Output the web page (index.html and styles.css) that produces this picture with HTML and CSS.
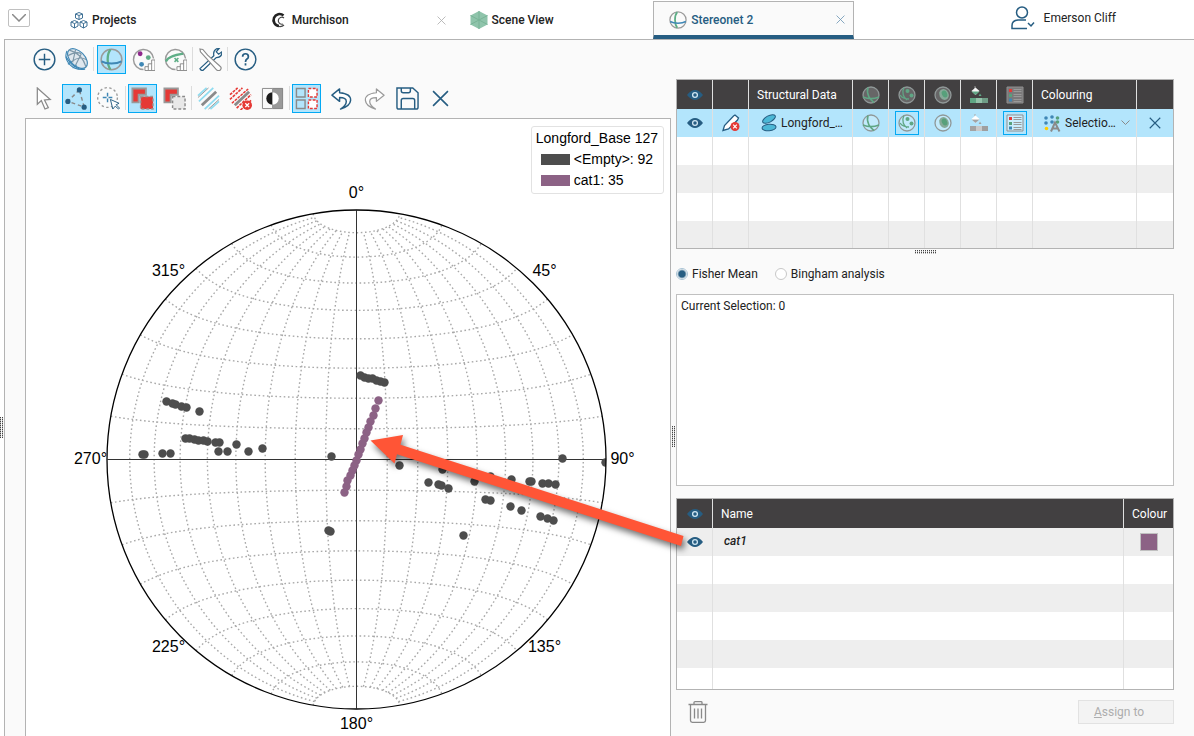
FILE: index.html
```html
<!DOCTYPE html>
<html lang="en">
<head>
    <meta charset="UTF-8">
    <meta name="viewport" content="width=device-width, initial-scale=1.0">
    <title>Stereonet 2</title>
    <link rel="stylesheet" href="styles.css">
</head>
<body>
    <!-- Shared icons -->
    <svg class="sprite" aria-hidden="true">
        <symbol id="i-eye" viewBox="0 0 16 10"><path d="M0 5Q8-5 16 5Q8 15 0 5z" fill="#265d82"/><circle cx="8" cy="5" r="2.4" fill="none" stroke="#cfe6f2" stroke-width="1.3"/></symbol>
        <symbol id="i-close" viewBox="0 0 16 16"><path d="M1 1l14 14M15 1L1 15" fill="none" stroke="currentColor" stroke-width="1.5"/></symbol>
        <symbol id="i-net" viewBox="0 0 24 24"><circle cx="12" cy="12" r="10.8" fill="none" stroke="#9a9a9a" stroke-width="1.6"/><path d="M11 1.5C7 6 7 17 11 22.5" fill="none" stroke="#5fae87" stroke-width="2.4"/><path d="M1.5 14C7 17 17 17 22.5 14" fill="none" stroke="#3f87b5" stroke-width="2"/></symbol>
        <symbol id="i-planes" viewBox="0 0 18 18"><circle cx="9" cy="9" r="8" class="disc"/><path d="M6 1.5C4 8 8 14 12 16.5M1 11C6 13 12 13 17 11" fill="none" stroke="#5fa684" stroke-width="1.6"/></symbol>
        <symbol id="i-poles" viewBox="0 0 18 18"><circle cx="9" cy="9" r="8" class="disc"/><path d="M6 1.5C3 7 6 12 9 14M2 9C4 12 7 13 11 13" fill="none" stroke="#5fa684" stroke-width="1.3"/><circle cx="9.5" cy="5" r="2" fill="#5fa684"/><circle cx="13.5" cy="9.5" r="2" fill="#5fa684"/></symbol>
        <symbol id="i-contour" viewBox="0 0 18 18"><circle cx="9" cy="9" r="8" class="disc"/><ellipse cx="10" cy="8.5" rx="4.6" ry="5.6" fill="#86a998" transform="rotate(-25 10 8.5)"/><ellipse cx="10.5" cy="8" rx="2.6" ry="3.6" fill="#57a07b" transform="rotate(-25 10.5 8)"/></symbol>
        <symbol id="i-bucket" viewBox="0 0 18 18"><path d="M5 0v4" stroke="#999" stroke-width="1"/><path d="M5.5 1.500l4 3.5-4 4-4-4z" class="pail"/><path d="M1.500 5.500h8l-4 3.500z" class="paint"/><path d="M10 7.500l1.600 2.500h-3z" class="paint"/><path d="M0 12h6v5H0z" class="paint"/><path d="M6 12h6v5H6z" class="paint-light"/><path d="M12 12h6v5h-6z" class="paint-mid"/></symbol>
        <symbol id="i-legend" viewBox="0 0 18 18"><path d="M1 1h16v16H1z" class="sheet"/><path d="M3 3h3v3H3z" fill="#e53935"/><path d="M3 8h3v3H3z" fill="#57a07b"/><path d="M3 12.500h3v3H3z" fill="#3f87b5"/><path d="M7.500 3.500h8M7.500 5.500h8M7.500 8.500h8M7.500 10.500h8M7.500 13.500h8M7.500 15.500h8" stroke="#999" stroke-width="1"/></symbol>
    </svg>

    <header class="topbar">
        <button class="menu-button" aria-label="Menu"><svg width="14" height="8" viewBox="0 0 14 8"><path d="M0 0l7 7 7-7" fill="none" stroke="#8a8a8a" stroke-width="1.5"/></svg></button>
        <nav class="tabs">
            <div class="tab">
                <svg width="18" height="17" viewBox="0 0 18 17" fill="none" stroke="#3f7196" stroke-width="1"><path d="M9 .5l3.500 1.500v4L9 7.500 5.500 6V2zM5.500 2L9 3.500 12.500 2M9 3.500v4"/><path d="M4.500 8.500L8 10v4l-3.500 2L1 14v-4zM1 10l3.500 1.500L8 10M4.500 11.500V16"/><path d="M13.500 8.500L17 10v4l-3.500 2-3.500-2v-4zM10 10l3.500 1.500L17 10M13.500 11.500V16"/></svg>
                <a href="#">Projects</a>
            </div>
            <div class="tab">
                <svg width="18" height="16" viewBox="0 0 18 16"><path d="M13.500 3.500A6 6 0 1 0 9 14" fill="none" stroke="#222" stroke-width="2.600"/><path d="M14 6A3.500 3.500 0 1 0 13 12M9 14.500q3 .5 5-1.500" fill="none" stroke="#444" stroke-width="1.200"/></svg>
                <a href="#">Murchison</a>
                <button class="tab-close" aria-label="Close Murchison"><svg width="9" height="9"><use href="#i-close"/></svg></button>
            </div>
            <div class="tab">
                <svg width="18" height="18" viewBox="0 0 18 18"><path d="M9 0l8.500 4.500v9L9 18 .5 13.500v-9z" fill="#8fc4ab"/><path d="M9 9V0M9 9l8.500-4.500M9 9l8.500 4.500M9 9v9M9 9L.5 13.500M9 9L.5 4.500" stroke="#79b397"/></svg>
                <a href="#">Scene View</a>
            </div>
            <div class="tab tab-active">
                <svg width="18" height="18"><use href="#i-net"/></svg>
                <a href="#">Stereonet 2</a>
                <button class="tab-close" aria-label="Close Stereonet 2"><svg width="9" height="9"><use href="#i-close"/></svg></button>
            </div>
        </nav>
        <button class="user">
            <svg width="24" height="24" viewBox="0 0 24 24" fill="none" stroke="#265d82" stroke-width="1.500"><circle cx="11" cy="6.500" r="5.500"/><path d="M16 22.500H1v-3q0-5 6-5.500h8M17 17l3 3 3-3.500"/></svg>
            <span>Emerson Cliff</span>
        </button>
    </header>

    <div class="workspace">
        <div class="gutter"><span class="grip grip-v"></span></div>
        <main class="panel">
            <section class="view">
                <div class="toolbar">
                    <button class="tool" aria-label="Add"><svg viewBox="0 0 24 24"><circle cx="12" cy="12" r="10.800" fill="none" stroke="#265d82" stroke-width="1.500"/><path d="M12 6v12M6 12h12" stroke="#265d82" stroke-width="1.500"/></svg></button>
                    <button class="tool" aria-label="Wireframe"><svg viewBox="0 0 24 24" fill="none" stroke="#3f87b5" stroke-width="1.200"><path d="M2 3C-2 13 7 24 21 22"/><ellipse cx="13" cy="11" rx="12.500" ry="7.500" transform="rotate(45 13 11)" fill="#dfe7ee"/><path d="M4 2Q18 6 22 20M11 2L8 15M17 6l-6 12M3 8Q12 3 17 6M7 14Q15 8 22 12" stroke="#7d97a8"/><path d="M1 9q5 9 14 13M3 17l4-3M8 21l4-3"/></svg></button>
                    <span class="separator"></span>
                    <button class="tool tool-on" aria-label="Stereonet"><svg><use href="#i-net"/></svg></button>
                    <button class="tool" aria-label="Pole statistics"><svg viewBox="0 0 24 24"><path d="M12 22.500A10.500 10.500 0 1 1 22.500 11" fill="none" stroke="#9a9a9a" stroke-width="1.500"/><circle cx="8.500" cy="6" r="2.500" fill="#8e2a8c"/><circle cx="17" cy="10" r="2.500" fill="#5fae87"/><circle cx="10" cy="17" r="2.500" fill="#3f87b5"/><path d="M13.500 23.500v-4H17v-3h3.500v-4H24v11zM17 23v-4M20.500 23v-7" fill="#fff" stroke="#8a8a8a"/></svg></button>
                    <button class="tool" aria-label="Plane statistics"><svg viewBox="0 0 24 24"><path d="M12 22.500A10.500 10.500 0 1 1 22.500 11" fill="none" stroke="#9a9a9a" stroke-width="1.500"/><path d="M2 14C5 8 14 7 20 6" fill="none" stroke="#5fae87" stroke-width="2.400"/><path d="M11 10.500l4 4M15 10.500l-4 4" stroke="#5fae87" stroke-width="1.600"/><path d="M13.500 23.500v-4H17v-3h3.500v-4H24v11zM17 23v-4M20.500 23v-7" fill="#fff" stroke="#8a8a8a"/></svg></button>
                    <span class="separator"></span>
                    <button class="tool" aria-label="Settings"><svg viewBox="0 0 24 24" fill="#fff"><path d="M1 21.500L15.500 8q-1-5 2.500-7l3-.5-3 3.500 2.500 2.500L24 4q0 6-6 6L4 23.500q-2 0-3-2z" stroke="#265d82" stroke-width="1.300"/><path d="M1 1l3 .5 5 6L22 19q2 1.500.5 3.500t-4 .5L7 10 1.500 4z" stroke="#8a8a8a" stroke-width="1.200"/></svg></button>
                    <span class="separator"></span>
                    <button class="tool" aria-label="Help"><svg viewBox="0 0 24 24" fill="none" stroke="#265d82" stroke-width="1.500"><circle cx="12" cy="12" r="10.800"/><path d="M9 9q0-3 3-3t3 3q0 1.500-1.500 2.500T12 14.500M12 16v2.200" stroke-width="1.800"/></svg></button>
                </div>
                <div class="toolbar toolbar-edit">
                    <button class="tool" aria-label="Select"><svg viewBox="0 0 24 24"><path d="M4.500 1v17l4.200-3.800L12.500 23l3.500-1.500-4-8 6-.5z" fill="#fff" stroke="#8a8a8a" stroke-width="1.300"/></svg></button>
                    <button class="tool tool-on" aria-label="Polygon select"><svg viewBox="0 0 24 24"><path d="M15 3L3 15l17 6z" fill="none" stroke="#8a8a8a" stroke-width="1.500" stroke-dasharray="4 3"/><circle cx="15" cy="3" r="2.700" fill="#265d82"/><circle cx="3" cy="15" r="2.700" fill="#265d82"/><circle cx="20" cy="21" r="2.700" fill="#265d82"/></svg></button>
                    <button class="tool" aria-label="Area select"><svg viewBox="0 0 24 24"><circle cx="11" cy="11" r="10.300" fill="none" stroke="#9a9a9a" stroke-width="1.400" stroke-dasharray="2.500 2.500"/><path d="M11 6v10M6 11h10" stroke="#3f87b5" stroke-width="1.500" stroke-dasharray="4 2"/><path d="M14 13l2.500 10 2.500-3 3.500 3 1-1-3.500-3.500 3-1.500z" fill="#fff" stroke="#265d82"/></svg></button>
                    <span class="separator"></span>
                    <button class="tool tool-on" aria-label="Replace selection"><svg viewBox="0 0 24 24"><path d="M1.500 1.500h14V8H8v8H1.500z" fill="#e53935" stroke="#999" stroke-width="2"/><path d="M10 10h13v13H10z" fill="#e53935" stroke="#999" stroke-width="1.500" stroke-dasharray="3 2"/></svg></button>
                    <button class="tool" aria-label="Clear selection"><svg viewBox="0 0 24 24"><path d="M1.500 1.500h14V8H8v8H1.500z" fill="#e53935" stroke="#999" stroke-width="2"/><path d="M10 10h13v13H10z" fill="#e8e8e8" stroke="#8a8a8a" stroke-width="1.500" stroke-dasharray="3 2"/></svg></button>
                    <span class="separator"></span>
                    <button class="tool" aria-label="Show planes"><svg viewBox="0 0 24 24"><path d="M1 9l9-8M2 15L17 1M8 23L23 9M14 23l9-8" stroke="#8fdcf0" stroke-width="1.800"/><path d="M1 11L12 1M12 23l11-10" stroke="#999"/><path d="M5 19L20 5" stroke="#8a8a8a" stroke-width="3"/></svg></button>
                    <button class="tool" aria-label="Remove planes"><svg viewBox="0 0 24 24"><path d="M1 8l8-7M1 13L14 1M8 22L23 8M12 24L23 14" stroke="#e53935" stroke-width="1.700" stroke-dasharray="3 1"/><path d="M3 17L20 2" stroke="#e53935" stroke-width="1.500" stroke-dasharray="3 1"/><path d="M6 19L21 5" stroke="#8a8a8a" stroke-width="3"/><circle cx="19" cy="19" r="5" fill="#e53935"/><path d="M17 17l4 4M21 17l-4 4" stroke="#fff" stroke-width="1.400"/></svg></button>
                    <button class="tool" aria-label="Contrast"><svg viewBox="0 0 24 24"><path d="M12 1h11v22H12z" fill="#999"/><path d="M1.500 1.500h21v21h-21z" fill="none" stroke="#888"/><path d="M12 1v22" stroke="#999"/><path d="M12 5.500a6.500 6.500 0 0 0 0 13z" fill="#1c1c1c"/><path d="M12 5.500a6.500 6.500 0 0 1 0 13z" fill="#fff"/></svg></button>
                    <span class="separator"></span>
                    <button class="tool tool-on" aria-label="Split view"><svg viewBox="0 0 24 24" fill="none" stroke-width="1.500"><path d="M1.500 1.500h9v9h-9zM1.500 13.500h9v9h-9z" stroke="#8a8a8a"/><path d="M14 1.500h9v9h-9zM14 13.500h9v9h-9z" fill="#fff" stroke="#e53935" stroke-dasharray="3 1.500"/></svg></button>
                    <div class="toolbar-group">
                        <button class="tool" aria-label="Undo"><svg viewBox="0 0 24 24"><path d="M2 8.500L10 2v4Q22 7 21.500 14 21 20 11 23q6-4 6-8t-7-4v4z" fill="#fff" stroke="#265d82" stroke-width="1.500" stroke-linejoin="round"/></svg></button>
                        <button class="tool" aria-label="Redo"><svg viewBox="0 0 24 24"><path d="M22 8.500L14 2v4Q2 7 2.500 14 3 20 13 23q-6-4-6-8t7-4v4z" fill="#fff" stroke="#9a9a9a" stroke-width="1.300" stroke-linejoin="round"/></svg></button>
                        <button class="tool" aria-label="Save"><svg viewBox="0 0 24 24" fill="none" stroke="#265d82" stroke-width="1.500"><path d="M1.500 1h16L23 6v15q0 2-2 2H3q-2 0-2-2V1zM5.500 1v3q0 2 2 2H13q2 0 2-2V1M5.500 23V14q0-2 2-2h10q2 0 2 2v9"/></svg></button>
                        <button class="tool" aria-label="Close"><svg class="tool-close"><use href="#i-close"/></svg></button>
                    </div>
                </div>
                <div class="plot">
                    <svg class="stereonet" viewBox="-330.5 -340.5 644 617" role="img" aria-label="Stereonet">
                        <defs><clipPath id="net-clip"><circle r="249.5"/></clipPath></defs>
                        <path class="net-grid" id="net-grid"/>
                        <path class="net-axis" d="M-249 0H249M0-249V249"/>
                        <g clip-path="url(#net-clip)">
                            <g id="poles-empty" fill="#4d4d4d"></g>
                            <g id="poles-cat1" fill="#8c6285"></g>
                        </g>
                        <circle class="net-rim" r="249.5"/>
                        <g class="net-labels">
                            <text x="0" y="-262">0°</text>
                            <text x="188" y="-184">45°</text>
                            <text x="266" y="4">90°</text>
                            <text x="188" y="192">135°</text>
                            <text x="0" y="269">180°</text>
                            <text x="-188" y="192">225°</text>
                            <text x="-266" y="4">270°</text>
                            <text x="-188" y="-184">315°</text>
                        </g>
                        <path class="arrow" d="M14-19L46.500-24.500 44-14.800 327 76.500 324.500 86.500 40.500-5.200 38 4z"/>
                    </svg>
                    <div class="legend">
                        <div class="legend-title">Longford_Base 127</div>
                        <div class="legend-item"><span class="swatch swatch-empty"></span>&lt;Empty&gt;: 92</div>
                        <div class="legend-item"><span class="swatch swatch-cat1"></span>cat1: 35</div>
                    </div>
                </div>
            </section>

            <div class="splitter"><span class="grip grip-v"></span></div>

            <aside class="side">
                <div class="table-wrap data-wrap">
                    <table>
                        <colgroup><col class="c-icon"><col class="c-icon"><col class="c-name"><col class="c-icon"><col class="c-icon"><col class="c-icon"><col class="c-icon"><col class="c-icon"><col class="c-name"><col></colgroup>
                        <thead>
                            <tr>
                                <th class="icon-cell"><svg width="16" height="10"><use href="#i-eye"/></svg></th>
                                <th></th>
                                <th>Structural Data</th>
                                <th class="icon-cell"><svg width="18" height="18"><use href="#i-planes"/></svg></th>
                                <th class="icon-cell"><svg width="18" height="18"><use href="#i-poles"/></svg></th>
                                <th class="icon-cell"><svg width="18" height="18"><use href="#i-contour"/></svg></th>
                                <th class="icon-cell"><svg width="18" height="18"><use href="#i-bucket"/></svg></th>
                                <th class="icon-cell"><svg width="18" height="18"><use href="#i-legend"/></svg></th>
                                <th>Colouring</th>
                                <th></th>
                            </tr>
                        </thead>
                        <tbody>
                            <tr class="selected">
                                <td class="icon-cell"><button class="cell-button" aria-label="Visible"><svg width="16" height="10"><use href="#i-eye"/></svg></button></td>
                                <td class="icon-cell"><button class="cell-button" aria-label="Edit"><svg width="18" height="18" viewBox="0 0 18 18"><path d="M1 16.500l1.500-5L11.500 2l1.500-1 3.500 3-1 2-9 9z" fill="#fff" stroke="#265d82" stroke-width="1.300"/><circle cx="13" cy="12.500" r="4.500" fill="#e53935"/><path d="M11.200 10.700l3.600 3.600M14.800 10.700l-3.600 3.600" stroke="#fff" stroke-width="1.200"/></svg></button></td>
                                <td><span class="cell-name"><svg width="16" height="18" viewBox="0 0 16 18" fill="#4cb8d6" stroke="#265d82"><ellipse cx="8" cy="5" rx="7" ry="3.200" transform="rotate(-28 8 5)"/><ellipse cx="8" cy="13.500" rx="7" ry="3.200" transform="rotate(-5 8 13)"/></svg>Longford_…</span></td>
                                <td class="icon-cell"><button class="cell-button" aria-label="Planes"><svg width="18" height="18"><use href="#i-planes"/></svg></button></td>
                                <td class="icon-cell"><button class="cell-button cell-on" aria-label="Poles"><svg width="18" height="18"><use href="#i-poles"/></svg></button></td>
                                <td class="icon-cell"><button class="cell-button" aria-label="Contours"><svg width="18" height="18"><use href="#i-contour"/></svg></button></td>
                                <td class="icon-cell"><button class="cell-button" aria-label="Fill" disabled><svg width="18" height="18"><use href="#i-bucket"/></svg></button></td>
                                <td class="icon-cell"><button class="cell-button cell-on" aria-label="Legend"><svg width="18" height="18"><use href="#i-legend"/></svg></button></td>
                                <td><span class="cell-colouring"><svg width="17" height="17" viewBox="0 0 17 17"><g fill="#3f87b5"><circle cx="2" cy="3" r="1.800"/><circle cx="8" cy="2" r="1.800"/><circle cx="2" cy="8" r="1.800"/><circle cx="8" cy="7" r="1.800"/></g><g fill="#57a07b"><circle cx="13.500" cy="3" r="1.800"/><circle cx="13.500" cy="7" r="1.800"/></g><circle cx="2.500" cy="13.500" r="1.800" fill="#fc0"/><path d="M7 16.500L11 7.500l4.500 9M8.500 13.500h5" fill="none" stroke="#8a8a8a" stroke-width="2"/></svg><select aria-label="Colouring"><option>Selectio…</option></select><svg class="chevron" width="9" height="6" viewBox="0 0 9 6"><path d="M.5.5l4 4 4-4" fill="none" stroke="#8a8a8a"/></svg></span></td>
                                <td class="icon-cell"><button class="cell-button cell-remove" aria-label="Remove"><svg width="12" height="12"><use href="#i-close"/></svg></button></td>
                            </tr>
                            <tr><td></td><td></td><td></td><td></td><td></td><td></td><td></td><td></td><td></td><td></td></tr>
                            <tr><td></td><td></td><td></td><td></td><td></td><td></td><td></td><td></td><td></td><td></td></tr>
                            <tr><td></td><td></td><td></td><td></td><td></td><td></td><td></td><td></td><td></td><td></td></tr>
                            <tr><td></td><td></td><td></td><td></td><td></td><td></td><td></td><td></td><td></td><td></td></tr>
                        </tbody>
                    </table>
                </div>
                <div class="side-splitter"><span class="grip grip-h"></span></div>
                <div class="analysis">
                    <label><input type="radio" name="analysis" checked>Fisher Mean</label>
                    <label><input type="radio" name="analysis">Bingham analysis</label>
                </div>
                <textarea class="result" aria-label="Result" readonly>Current Selection: 0</textarea>
                <div class="table-wrap category-wrap">
                    <table>
                        <colgroup><col class="c-icon"><col><col class="c-colour"></colgroup>
                        <thead>
                            <tr><th class="icon-cell"><svg width="16" height="10"><use href="#i-eye"/></svg></th><th>Name</th><th>Colour</th></tr>
                        </thead>
                        <tbody>
                            <tr><td class="icon-cell"><button class="cell-button" aria-label="Visible"><svg width="16" height="10"><use href="#i-eye"/></svg></button></td><td class="category">cat1</td><td class="icon-cell"><button class="colour-chip" aria-label="cat1 colour"></button></td></tr>
                            <tr><td></td><td></td><td></td></tr>
                            <tr><td></td><td></td><td></td></tr>
                            <tr><td></td><td></td><td></td></tr>
                            <tr><td></td><td></td><td></td></tr>
                            <tr><td></td><td></td><td></td></tr>
                        </tbody>
                    </table>
                </div>
                <div class="side-footer">
                    <button class="trash" aria-label="Delete"><svg width="20" height="22" viewBox="0 0 20 22" fill="none" stroke="#8a8a8a" stroke-width="1.300"><path d="M.5 3.500h19M6 3V1.500Q6 .7 7 .7h6q1 0 1 .8V3M2.500 4v15.500q0 1.800 1.800 1.800h11.400q1.800 0 1.800-1.800V4M6.500 7.500v10M10 7.500v10M13.500 7.500v10"/></svg></button>
                    <button class="assign" disabled><u>A</u>ssign to</button>
                </div>
            </aside>
        </main>
    </div>

    <script src="script.js"></script>
</body>
</html>
```
FILE: styles.css
```css
:root {
    --blue: #265d82;
    --accent: #03a9f4;
    --selected: #b3e5fc;
    --panel: #fafafa;
    --line: #b3b3b3;
    --header: #424041;
    --cat1: #8c6285;
    --text: #222222;
}
* {
    box-sizing: border-box;
}
body {
    margin: 0;
    height: 100vh;
    display: flex;
    flex-direction: column;
    overflow: hidden;
    background: #ffffff;
    color: var(--text);
    font-family: Roboto, sans-serif;
    font-size: 12px;
    line-height: 16px;
}
button {
    font: inherit;
    color: inherit;
    background: none;
    border: none;
    padding: 0;
}
svg {
    display: block;
    flex: none;
}
.sprite {
    position: absolute;
    width: 0;
    height: 0;
}

/* Top bar */
.topbar {
    display: flex;
    height: 39px;
    flex: none;
    padding-left: 8px;
}
.menu-button {
    width: 22px;
    height: 18px;
    margin: 9px 24px 0 0;
    display: flex;
    align-items: center;
    justify-content: center;
    border: 1px solid #c0c0c0;
    border-radius: 2px;
}
.tabs {
    display: flex;
    flex: 0 1 800px;
}
.tab {
    flex: 1;
    display: flex;
    align-items: center;
    gap: 4px;
    margin-top: 1px;
    padding: 0 8px 0 16px;
    font-weight: 500;
}
.tab a {
    flex: 1;
    color: inherit;
    text-decoration: none;
}
.tab-close {
    color: #b0b0b0;
}
.tab-active {
    background: var(--panel);
    border: 1px solid var(--line);
    border-bottom: 4px solid var(--blue);
    padding: 2px 8px 0 15px;
    color: var(--blue);
}
.tab-active .tab-close {
    color: #6f98b5;
}
.user {
    display: flex;
    align-items: center;
    gap: 9px;
    height: 36px;
    margin: 0 78px 0 auto;
}

/* Workspace */
.workspace {
    flex: 1;
    display: flex;
    min-height: 0;
}
.gutter {
    width: 4px;
    display: flex;
    align-items: center;
    padding-top: 79px;
}
.grip {
    background-image: linear-gradient(90deg, transparent 50%, #fafafa 50%), linear-gradient(#444444 50%, #bbbbbb 50%);
    background-size: 2px 2px;
}
.grip-v {
    width: 4px;
    height: 21px;
}
.grip-h {
    width: 21px;
    height: 4px;
}
.panel {
    flex: 1;
    display: flex;
    min-width: 0;
    padding: 0 20px 0 20px;
    background: var(--panel);
    border-top: 1px solid var(--line);
    border-left: 1px solid var(--line);
}
.view {
    flex: 1;
    min-width: 0;
    display: flex;
    flex-direction: column;
    padding-top: 5px;
    position: relative;
    z-index: 1;
}

/* Toolbars */
.toolbar {
    display: flex;
    gap: 3px;
    padding-left: 5px;
    margin-bottom: 10px;
}
.toolbar-edit {
    margin-bottom: 5px;
}
.toolbar-group {
    display: flex;
    gap: 4px;
    margin-left: 3px;
}
.tool {
    width: 29px;
    height: 29px;
    display: flex;
    align-items: center;
    justify-content: center;
    border: 1px solid transparent;
}
.tool svg {
    width: 23px;
    height: 23px;
}
.tool .tool-close {
    width: 17px;
    height: 17px;
    color: var(--blue);
}
.tool-on {
    background: var(--selected);
    border-color: var(--accent);
}
.separator {
    width: 1px;
    height: 24px;
    margin: 2px 0 0 -1px;
    background: #dcdcdc;
}
.toolbar-edit .separator {
    margin-right: -1px;
}

/* Plot */
.plot {
    flex: 1;
    min-height: 0;
    position: relative;
    background: #ffffff;
    border: 1px solid var(--line);
    border-bottom: none;
}
.stereonet {
    width: 100%;
    height: 100%;
    overflow: visible;
}
.net-grid {
    fill: none;
    stroke: #a8a8a8;
    stroke-width: 1.4;
    stroke-dasharray: 1.6 2.6;
}
.net-axis {
    stroke: #333333;
    stroke-width: 1;
}
.net-rim {
    fill: none;
    stroke: #000000;
    stroke-width: 1.3;
}
.net-labels {
    font-family: "Liberation Sans", Arial, sans-serif;
    font-size: 16px;
    text-anchor: middle;
    fill: #000000;
}
.arrow {
    fill: #ff5536;
    filter: drop-shadow(2px 4px 3px rgba(0, 0, 0, 0.55));
}
.legend {
    position: absolute;
    top: 7px;
    right: 6px;
    padding: 1px 5px 2px 4px;
    border: 1px solid #e2e2e2;
    border-radius: 3px;
    background: #ffffff;
    color: #000000;
    font-family: "Liberation Sans", Arial, sans-serif;
    font-size: 14px;
    line-height: 21px;
}
.legend-item {
    display: flex;
    align-items: center;
    gap: 4px;
    padding-left: 5px;
}
.swatch {
    width: 29px;
    height: 11px;
}
.swatch-empty {
    background: #4d4d4d;
}
.swatch-cat1 {
    background: var(--cat1);
}

/* Side panel */
.splitter {
    width: 5px;
    display: flex;
    align-items: center;
    justify-content: flex-end;
    padding-top: 97px;
}
.side {
    width: 498px;
    display: flex;
    flex-direction: column;
    padding: 39px 0 12px;
}
.table-wrap {
    overflow: hidden;
    border: 1px solid var(--line);
    background: #ffffff;
}
.data-wrap {
    height: 170px;
    flex: none;
}
.category-wrap {
    flex: 1 1 10px;
    margin-top: 12px;
}
table {
    width: 100%;
    table-layout: fixed;
    border-collapse: separate;
    border-spacing: 0;
}
.c-icon {
    width: 36px;
}
.c-name {
    width: 104px;
}
.c-colour {
    width: 49px;
}
th, td {
    padding: 0 0 0 8px;
    border-right: 1px solid #e0e0e0;
    white-space: nowrap;
}
th:last-child, td:last-child {
    border-right: none;
}
th {
    height: 29px;
    background: var(--header);
    color: #ffffff;
    font-weight: 400;
    text-align: left;
}
td {
    height: 28px;
}
.data-wrap tr:nth-child(odd) td, .category-wrap tr:nth-child(odd) td {
    background: #eeeeee;
}
.data-wrap .selected:nth-child(odd) td {
    background: var(--selected);
}
.icon-cell {
    padding: 0;
}
th.icon-cell svg {
    margin: 0 auto;
}
.cell-button {
    width: 24px;
    height: 24px;
    margin: 0 auto;
    display: flex;
    align-items: center;
    justify-content: center;
    border: 1px solid transparent;
}
.cell-on {
    border-color: var(--accent);
}
.cell-remove {
    color: var(--blue);
}
.cell-name {
    display: flex;
    align-items: center;
    gap: 4px;
    padding-left: 4px;
}
.cell-colouring {
    display: flex;
    align-items: center;
    gap: 4px;
    padding: 0 6px 0 3px;
}
select {
    flex: 1;
    min-width: 0;
    appearance: none;
    border: none;
    padding: 0;
    background: none;
    font: inherit;
    color: inherit;
}
.disc {
    fill: #ffffff;
    fill-opacity: 0.2;
    stroke: #909898;
    stroke-width: 1.3;
}
td .disc {
    fill-opacity: 0.4;
}
.pail {
    fill: #f5f5f5;
}
.paint {
    fill: #5fa684;
}
.paint-light {
    fill: #93c2aa;
}
.paint-mid {
    fill: #6f9c86;
}
.sheet {
    fill: #ffffff;
    fill-opacity: 0.3;
    stroke: #8f8f8f;
}
.cell-button:disabled svg {
    filter: grayscale(1) brightness(1.1);
}
.side-splitter {
    height: 5px;
    display: flex;
    justify-content: center;
    align-items: center;
}
.analysis {
    height: 40px;
    flex: none;
    display: flex;
    align-items: center;
    gap: 17px;
}
.analysis label {
    display: flex;
    align-items: center;
    gap: 4px;
}
input[type="radio"] {
    appearance: none;
    width: 12px;
    height: 12px;
    margin: 0;
    border: 1px solid #c8c8c8;
    border-radius: 50%;
    background: #ffffff;
}
input[type="radio"]:checked {
    border-color: #a9c3d4;
    background: radial-gradient(circle, var(--blue) 3px, #ffffff 5px);
}
.result {
    flex: 1 1 10px;
    min-height: 0;
    margin: 0;
    padding: 3px 4px;
    resize: none;
    border: 1px solid #c0c0c0;
    border-radius: 0;
    background: #ffffff;
    color: inherit;
    font: inherit;
}
.category {
    padding: 0 0 2px 11px;
    font-weight: 500;
    font-style: italic;
}
.colour-chip {
    display: block;
    width: 18px;
    height: 18px;
    margin: 0 auto;
    border: 1px solid #c0c0c0;
    background: var(--cat1);
}
.side-footer {
    display: flex;
    justify-content: space-between;
    align-items: center;
    flex: none;
    margin-top: 10px;
    padding-left: 12px;
}
.assign {
    width: 96px;
    height: 24px;
    padding-right: 14px;
    border: 1px solid #e2e2e2;
    background: #f3f3f3;
    color: #adadad;
}
```
FILE: script.js
```js
const RADIUS = 249.5;
const SVG_NS = 'http://www.w3.org/2000/svg';

// Equal area projection, degrees to plot coordinates
function project(lat, lon) {
    const p = lat * Math.PI / 180;
    const l = lon * Math.PI / 180;
    const k = RADIUS / Math.sqrt(1 + Math.cos(p) * Math.cos(l));
    return [k * Math.cos(p) * Math.sin(l), -k * Math.sin(p)];
}

function line(points) {
    return 'M' + points.map(p => p[0].toFixed(2) + ' ' + p[1].toFixed(2)).join('L');
}

function drawGrid() {
    let d = '';
    for (let a = -80; a <= 80; a += 10) {
        const meridian = [];
        const parallel = [];
        for (let b = -80; b <= 80; b += 2) {
            meridian.push(project(b, a));
        }
        for (let b = -90; b <= 90; b += 2) {
            parallel.push(project(a, b));
        }
        if (a !== 0) {
            d += line(meridian) + line(parallel);
        }
    }
    document.getElementById('net-grid').setAttribute('d', d);
}

function drawPoles(id, poles) {
    const group = document.getElementById(id);
    poles.forEach(([x, y]) => {
        const dot = document.createElementNS(SVG_NS, 'circle');
        dot.setAttribute('cx', x);
        dot.setAttribute('cy', y);
        dot.setAttribute('r', 4.2);
        group.appendChild(dot);
    });
}

const empty = [
    [-190, -58], [-184, -56], [-181, -55], [-175, -53], [-170, -52], [-157, -48],
    [-171, -21], [-167, -21], [-162, -20], [-158, -19], [-153, -19], [-149, -18],
    [-141, -17], [-137, -17], [-138, -8], [-129, -8], [-120, -15], [-108, -8], [-94, -11],
    [-214, -5], [-212, -5], [-194, -6], [-186, -6], [-25, -3], [-28, 71], [-26, 72],
    [4, -84], [8, -82], [12, -81], [16, -81], [20, -79], [24, -78], [28, -77],
    [43, 6], [86, 10], [72, 23], [82, 25], [85, 26], [92, 29], [118, 22], [134, 17],
    [155, 20], [173, 22], [175, 22], [186, 24], [192, 24], [199, 25], [206, -1],
    [129, 40], [134, 41], [154, 47], [165, 51], [184, 57], [191, 59], [197, 61],
    [107, 76], [249, 3]
];

const cat1 = [
    [22, -59], [19, -51], [17, -44], [14, -38], [12, -32], [10, -27], [8, -21], [6, -16],
    [4, -10], [2, -5], [0, 1], [-2, 6], [-4, 11], [-6, 16], [-9, 21], [-10, 27], [-12, 33]
];

drawGrid();
drawPoles('poles-empty', empty);
drawPoles('poles-cat1', cat1);
```
